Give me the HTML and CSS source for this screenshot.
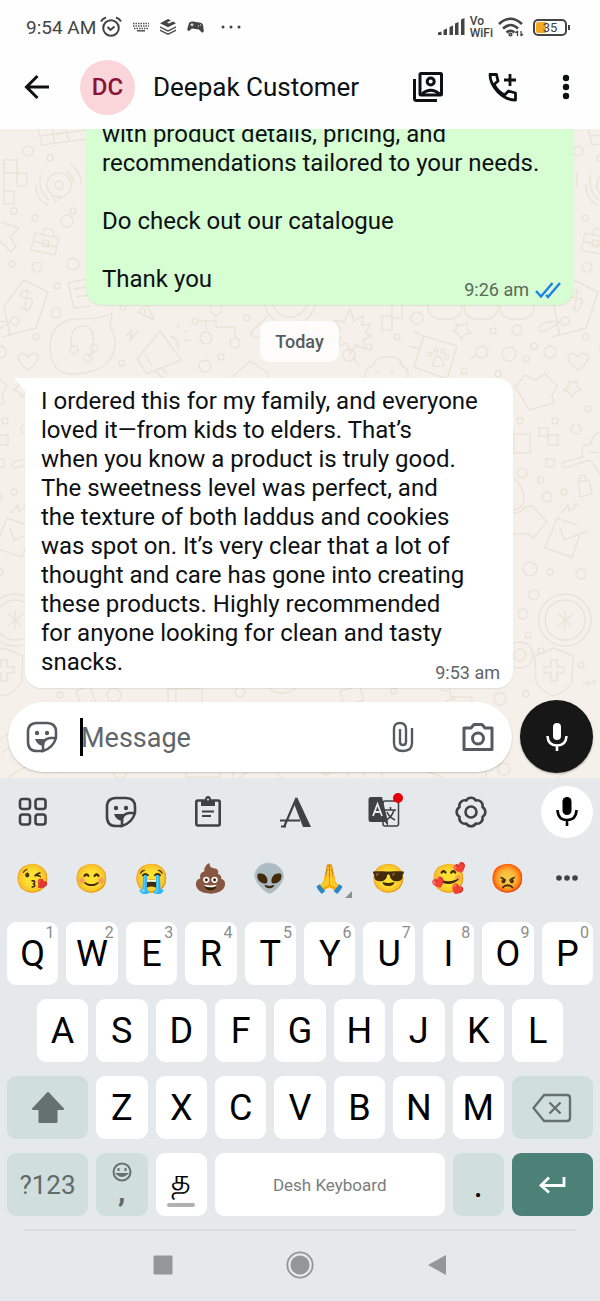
FILE: index.html
```
<!DOCTYPE html>
<html lang="en">
<head>
    <meta charset="UTF-8">
    <meta name="viewport" content="width=device-width, initial-scale=1.0">
    <title>Deepak Customer</title>
    <link rel="stylesheet" href="styles.css">
</head>
<body>
    <header class="top">
        <div class="status-bar">
            <div class="status-left">
                <span class="clock">9:54 AM</span>
                <svg class="alarm" width="22" height="22" viewBox="0 0 22 22" fill="none" stroke="#444" stroke-width="2">
                    <circle cx="11" cy="12" r="7.8"/>
                    <path d="M1 5.500Q2.500 2.500 6 1.500M21 5.500Q19.500 2.500 16 1.500M7.500 11l3 3 4-3.500"/>
                </svg>
                <svg width="16" height="10" viewBox="0 0 16 10" fill="none" stroke="#555" stroke-width="1.500">
                    <path stroke-dasharray="1.500 1" d="M0 1.500h16M0 4h16M1 6.500h14"/><path d="M4 8.800h8"/>
                </svg>
                <svg width="16" height="16" viewBox="0 0 16 16" fill="#444">
                    <path d="M8 0l3 1.500-4 2 2 1 4-2 3 1.700-8 4-8-4z"/>
                    <path d="M0 7.200l8 4 8-4v1.600l-8 4-8-4zM0 10.600l8 4 8-4v1.400L8 16l-8-4z"/>
                </svg>
                <svg width="17" height="12" viewBox="0 0 17 12">
                    <path fill="#444" d="M2 2Q3 0 6 .5l6 1Q15.500 1.500 16 4l.8 6q-.3 2-2 1.500L12 8.500 5 7.500 2 10Q0 10 .3 8z"/>
                    <path stroke="#fff" d="M3.500 3.800h3M5 2.300v3M11 5h1M13 4h1"/>
                </svg>
                <svg class="more-dots" width="20" height="4" viewBox="0 0 20 4" fill="#444">
                    <circle cx="2" cy="2" r="1.500"/><circle cx="10" cy="2" r="1.500"/><circle cx="18" cy="2" r="1.500"/>
                </svg>
            </div>
            <div class="status-right">
                <svg width="27" height="18" viewBox="0 0 27 18" fill="#444">
                    <path d="M0 14.500l3.500-1V17H0zM5.500 12l3.500-1.500V17H5.500zM11.500 9L15 7.500V17h-3.500zM17 5.500L20.500 4v13H17zM23 1.500L26.500 0v17H23z"/>
                </svg>
                <span class="vowifi">Vo<br>WiFi</span>
                <svg width="26" height="20" viewBox="0 0 26 20" fill="none" stroke="#444" stroke-width="2.600">
                    <path d="M1 7Q12.500-3.500 24 7M5 11.500q7.500-7 15 0M8.500 15.500q4-3.500 8 0"/>
                    <circle cx="12.500" cy="17.500" r=".8"/>
                    <path stroke-width="1.300" d="M19.500 14v5M19.500 14l-2 2M23 19v-5M23 19l2-2"/>
                </svg>
                <span class="battery"><span class="battery-level">35</span></span>
            </div>
        </div>

        <div class="chat-bar">
            <button class="icon-btn" aria-label="Back">
                <svg width="26" height="26" viewBox="0 0 26 26" fill="none" stroke="#0d1114" stroke-width="3">
                    <path d="M25 13H3M13.500 2L2.500 13l11 11"/>
                </svg>
            </button>
            <div class="avatar">DC</div>
            <h1 class="contact">Deepak Customer</h1>
            <div class="chat-actions">
                <button class="icon-btn" aria-label="Contacts">
                    <svg width="32" height="32" viewBox="0 0 32 32" fill="none" stroke="#0d1114" stroke-width="3">
                        <rect x="8" y="2.500" width="21.500" height="21.500" rx="1"/>
                        <circle cx="18.700" cy="10.500" r="3.500"/>
                        <path d="M10 23q8.700-7.500 17.500 0"/>
                        <path d="M2.500 8v19.500q0 2 2 2H25"/>
                    </svg>
                </button>
                <button class="icon-btn" aria-label="Call">
                    <svg width="30" height="30" viewBox="0 0 30 30" fill="none" stroke="#0d1114" stroke-width="2.800" stroke-linejoin="round">
                        <path d="M2 2.500h6.500l1.500 6.500-4 3.500q3.500 7 10.500 10.500l4-4 7 2V28Q18 28 10 20 2 11.500 2 2.500z"/>
                        <path d="M22 2v12M16 8h12"/>
                    </svg>
                </button>
                <button class="icon-btn" aria-label="More options">
                    <svg width="8" height="26" viewBox="0 0 8 26" fill="#0d1114">
                        <circle cx="4" cy="4" r="3.200"/><circle cx="4" cy="13" r="3.200"/><circle cx="4" cy="22" r="3.200"/>
                    </svg>
                </button>
            </div>
        </div>
    </header>

    <main class="conversation">
        <!-- Doodle wallpaper, the tile repeats every 550px -->
        <svg class="wallpaper" aria-hidden="true">
            <g id="doodles">
                <!-- small circles -->
                <circle cx="28" cy="22" r="5"/><circle cx="50" cy="29" r="3"/><circle cx="73" cy="82" r="3"/>
                <circle cx="67" cy="92" r="6"/><circle cx="14" cy="82" r="3"/><circle cx="35" cy="89" r="3"/>
                <circle cx="12" cy="135" r="3"/><circle cx="37" cy="138" r="5"/><circle cx="73" cy="135" r="6"/>
                <circle cx="57" cy="157" r="3"/><circle cx="56" cy="184" r="5"/><circle cx="36" cy="208" r="3"/>
                <circle cx="123" cy="178" r="3"/><circle cx="122" cy="234" r="3"/><circle cx="205" cy="237" r="6"/>
                <circle cx="221" cy="228" r="3"/><circle cx="247" cy="189" r="3"/><circle cx="417" cy="189" r="6"/>
                <circle cx="493" cy="202" r="3"/><circle cx="517" cy="201" r="5"/><circle cx="369" cy="218" r="3"/>
                <circle cx="397" cy="208" r="3"/><circle cx="509" cy="225" r="7"/><circle cx="526" cy="230" r="3"/>
                <circle cx="534" cy="217" r="3"/><circle cx="550" cy="223" r="6"/><circle cx="498" cy="245" r="3"/>
                <circle cx="464" cy="242" r="3"/><circle cx="520" cy="292" r="3"/><circle cx="555" cy="292" r="3"/>
                <circle cx="576" cy="300" r="5"/><circle cx="588" cy="280" r="3"/><circle cx="522" cy="344" r="5"/>
                <circle cx="541" cy="351" r="3"/><circle cx="547" cy="368" r="5"/><circle cx="564" cy="363" r="3"/>
                <circle cx="530" cy="440" r="7"/><circle cx="550" cy="443" r="3"/><circle cx="581" cy="445" r="5"/>
                <circle cx="534" cy="466" r="5"/><circle cx="523" cy="485" r="5"/><circle cx="528" cy="506" r="3"/>
                <circle cx="541" cy="522" r="3"/><circle cx="581" cy="536" r="3"/><circle cx="526" cy="565" r="3"/>
                <circle cx="60" cy="566" r="3"/><circle cx="114" cy="566" r="7"/><circle cx="394" cy="562" r="3"/>
                <circle cx="500" cy="570" r="6"/><circle cx="120" cy="642" r="7"/><circle cx="62" cy="640" r="3"/>
                <circle cx="326" cy="643" r="3"/><circle cx="504" cy="640" r="6"/><circle cx="240" cy="563" r="5"/>
                <!-- squares and calendar -->
                <path d="M4 31h13v13H4zM17 44h10v13H17zM4 44v18M4 62h10v13H4zM38 0l4 16 44-6M40 7l46-6M52 0l3 14M66 0l3 12"/>
                <path d="M382 187h10v14h-10zM392 175h10v14h-10zM514 305h16v19h-16zM539 299h9v8h-9zM548 306h10v10h-10zM546 330h8v8h-8z"/>
                <!-- broadcast -->
                <circle cx="59" cy="56" r="12"/><circle cx="59" cy="56" r="4"/>
                <path d="M53 67l2 6 7-5M41 46q-4 15 8 25M36 56q0 15 12 20M67 42q8 8 7 15M70 35q13 10 11 20"/>
                <!-- star and briefcase -->
                <path d="M0 93l19 6-9 9 6 9-5 6-10-10-7 8"/>
                <path d="M35 104l24 5-4 17-24-5zM42 105l3-6 8 2 1 7M33 112l23 6M43 111l6 1-1 6-6-1z"/>
                <!-- price tag -->
                <path d="M24 151l24 12-12 36-34 9M24 151L4 177l6 30"/><circle cx="15" cy="192" r="4"/>
                <path d="M31 164q-8-5-10 0t6 5 4 8-10 1M27 160l-2 21M10 193q-15-3-22 6 0 10 22-6"/>
                <path d="M68 154l20-4M68 154l6 25 16-2M74 160l12-2M76 168l12-2"/>
                <!-- heart -->
                <path d="M28 241q-10-7-10-12 1-6 7-4l3 3q5-7 10-1 2 5-10 14z"/>
                <!-- headset bubble -->
                <path d="M112 184q-12 7-40 6-21 5-22 27 0 30 26 28 37-3 39-29 0-12-5-18z"/>
                <path d="M71 219v-8q1-15 14-14 9 2 8 16v10l-5 5"/><circle cx="74" cy="221" r="4"/><circle cx="94" cy="219" r="4"/><circle cx="88" cy="229" r="4"/>
                <path d="M125 208l7-6-2 9 8-9M138 183l9-8 7 16zM145 180v5"/>
                <!-- megaphone -->
                <path d="M160 202l-23 28 10 15 34-14zM144 224l8 13M155 242l10 9M161 238l6 7M170 207q10 3 8 13M177 199l2-6M183 204l5-3M184 211l7 1"/>
                <!-- node tree -->
                <circle cx="216" cy="180" r="6"/><circle cx="195" cy="192" r="3"/><circle cx="206" cy="209" r="6"/><circle cx="235" cy="214" r="5"/>
                <path d="M216 186v12M198 192h17M206 193v10M216 198h19v11M232 248l18-16 18 12v8"/>
                <circle cx="290" cy="170" r="26"/><circle cx="290" cy="170" r="18"/><path d="M268 187l-15 14q-5 6 3 8l21-13"/>
                <!-- burst, pills, sparkle -->
                <path d="M350 180l4 12 9-5-1 9 9-1-6 9 7 3-9 4 2 9-9-4-6 9-3-11-9 3 3-9-7-3 7-4-6-10 9 2z"/>
                <rect x="428" y="166" width="34" height="24" rx="12"/><rect x="464" y="166" width="34" height="24" rx="12"/><rect x="500" y="166" width="34" height="24" rx="12"/>
                <path d="M456 195q6 3 11-1-1 7 4 10-8 0-10 7-1-7-8-9 5-1 3-7z"/>
                <!-- paw card -->
                <path d="M424 207l33 10-10 33-33-12zM414 203l10 4-5 13-10-3"/><path d="M434 231q4-8 8 0 5 8-4 6-8 2-4-6z"/>
                <circle cx="430" cy="225" r="2"/><circle cx="436" cy="221" r="2"/><circle cx="443" cy="222" r="2"/><circle cx="447" cy="228" r="2"/>
                <circle cx="482" cy="223" r="6"/><path d="M476 226l-6 4M354 230l5 7"/><circle cx="349" cy="226" r="6"/>
                <path d="M366 250q-4-10 7-13 2-10 14-9 13-2 15 9 8 4 6 12M375 245l4-4M390 245l4-4"/>
                <!-- shirt and dragonfly -->
                <path d="M515 258l10-12 10 5 10-6 12 12-5 9 2 8-25 7-8-14zM569 252q5 3 8 0-1 7 4 9-7 1-9 8-1-6-8-8 6-3 5-9z"/>
                <path d="M583 328q-4-12 8-13 1-12 11-12M583 328l-20 5q-3 4 2 6l25-8M591 332l10 15M590 323l12 1"/>
                <path d="M578 353l11-2 3 14-12 3zM580 352v-5l5-1 1 5M561 384l7-8 1 6 6-4v-3l3 1"/>
                <!-- puzzle and tick note -->
                <path d="M514 349q10 10 10 20t-10 12M514 384q10-1 10-6l8-1 15 16-14 16-4-4h-16"/>
                <path d="M577 396l-20-7-12 30 27 9 8-22M560 399l4 12 23-9"/>
                <!-- compass and shield -->
                <circle cx="565" cy="491" r="26"/><circle cx="565" cy="491" r="20"/><path d="M558 484l14 14M573 485l-15 12M565 481v20"/>
                <circle cx="520" cy="526" r="13"/><circle cx="520" cy="526" r="6"/>
                <path d="M554 519l19 8-1 26q-6 10-18 14-12-4-18-14l-1-26zM551 531h6v7h7v6h-7v8h-6v-8h-7v-6h7z"/>
                <path d="M582 557l6-5v4l7-5v4M168 560h34v14h-34zM176 560v14M340 562l20-5 4 14-20 5zM440 560q5 4 10 0-1 7 4 10-8 0-10 6"/>
                <path d="M264 554q14 18 34 4M0 610l34-21M2 624l36-26M76 562l14-5 6 18-14 4zM450 568h22v12"/>
                <!-- under the message box -->
                <path d="M8 648l28-16M186 636h34v12h-34zM232 648l4-11 11 6-8 6M268 640q5 4 10 0-1 7 4 9M338 634h10v14M354 634h10v14M372 634h10v14M410 636l32 12M460 640h26v10"/>
            </g>
            <use href="#doodles" x="-550"/>
            <use href="#doodles" x="550"/>
        </svg>

        <div class="messages">
            <div class="bubble sent">
                <p>with product details, pricing, and<br>recommendations tailored to your needs.<br><br>Do check out our catalogue<br><br>Thank you</p>
                <span class="meta">9:26 am
                    <svg width="26" height="18" viewBox="0 0 26 18" fill="none" stroke="#1b80e8" stroke-width="2.400">
                        <path d="M1 10l5 5.500L17.500 2M11 14l2 2L25 2"/>
                    </svg>
                </span>
            </div>
            <div class="day">Today</div>
            <div class="bubble received">
                <p>I ordered this for my family, and everyone loved it—from kids to elders. That’s<br>when you know a product is truly good. The sweetness level was perfect, and<br>the texture of both laddus and cookies<br>was spot on. It’s very clear that a lot of thought and care has gone into creating these products. Highly recommended<br>for anyone looking for clean and tasty snacks.</p>
                <span class="meta">9:53 am</span>
            </div>
        </div>

        <form class="composer">
            <div class="message-box">
                <button type="button" class="icon-btn" aria-label="Stickers">
                    <svg width="32" height="32" viewBox="0 0 32 32" fill="none" stroke="#545b60" stroke-width="2.600">
                        <path d="M17 30h-6q-9 0-9-9V11q0-9 9-9h10q9 0 9 9v6q-3 10-13 13v-5q0-7 7-8h6"/>
                        <g fill="#545b60" stroke="none"><circle cx="11" cy="12" r="2.200"/><circle cx="21" cy="12" r="2.200"/><path d="M9 18h12l-3 3-1 4q-6-1-8-7z"/></g>
                    </svg>
                </button>
                <span class="caret"></span>
                <input class="message-input" type="text" placeholder="Message" aria-label="Message">
                <button type="button" class="icon-btn" aria-label="Attach">
                    <svg width="22" height="32" viewBox="0 0 22 32" fill="none" stroke="#545b60" stroke-width="2.400">
                        <path d="M20 7v15q0 8-9 8t-9-8V8q0-6 6-6t6 6v13q0 3-3 3t-3-3V8"/>
                    </svg>
                </button>
                <button type="button" class="icon-btn" aria-label="Camera">
                    <svg width="32" height="30" viewBox="0 0 32 30" fill="none" stroke="#545b60" stroke-width="3">
                        <path d="M2 6h7l3-3.500h8L23 6h7v21.500H2z" stroke-linejoin="round"/><circle cx="16" cy="16.500" r="5.500"/>
                    </svg>
                </button>
            </div>
            <button type="button" class="record" aria-label="Record voice message">
                <svg width="22" height="30" viewBox="0 0 22 30" fill="none" stroke="#fff" stroke-width="2.600">
                    <rect x="7" y="1" width="8" height="17" rx="4" fill="#fff" stroke="none"/>
                    <path d="M1.500 14q.5 9.500 9.500 9.500T20.500 14M11 23v6"/>
                </svg>
            </button>
        </form>
    </main>

    <section class="keyboard">
        <div class="toolbar">
            <button class="tool" aria-label="Menu">
                <svg width="30" height="30" viewBox="0 0 30 30" fill="none" stroke="#3f4245" stroke-width="2.600">
                    <rect x="2" y="2" width="10" height="10" rx="2.500"/><rect x="17.500" y="2" width="10" height="10" rx="2.500"/>
                    <rect x="2" y="17.500" width="10" height="10" rx="2.500"/><rect x="17.500" y="17.500" width="10" height="10" rx="2.500"/>
                </svg>
            </button>
            <button class="tool" aria-label="Stickers">
                <svg width="32" height="32" viewBox="0 0 32 32" fill="none" stroke="#3f4245" stroke-width="2.600">
                    <path d="M17 30h-6q-9 0-9-9V11q0-9 9-9h10q9 0 9 9v6q-3 10-13 13v-5q0-7 7-8h6"/>
                    <g fill="#3f4245" stroke="none"><circle cx="11" cy="12" r="2.200"/><circle cx="21" cy="12" r="2.200"/><path d="M9 18h12l-3 3-1 4q-6-1-8-7z"/></g>
                </svg>
            </button>
            <button class="tool" aria-label="Clipboard">
                <svg width="28" height="32" viewBox="0 0 28 32" fill="none" stroke="#3f4245" stroke-width="2.600">
                    <rect x="2.300" y="4.500" width="23.400" height="25" rx="1.500"/>
                    <path fill="#3f4245" stroke="none" d="M7 4h4q0-4 3-4t3 4h4v6H7z"/><circle cx="14" cy="3.500" r="1" fill="#e5e9ec" stroke="none"/>
                    <path stroke-width="2" d="M8 15.500h12M8 20h9"/>
                </svg>
            </button>
            <button class="tool" aria-label="Fonts">
                <svg width="32" height="32" viewBox="0 0 32 32" fill="#3f4245">
                    <path d="M17 1l14 30h-8L14.500 9z"/><path d="M16.500 2L4 31M0 24.500h20M1 30.500h5" fill="none" stroke="#3f4245" stroke-width="2.200"/>
                </svg>
            </button>
            <button class="tool" aria-label="Translate">
                <svg width="32" height="32" viewBox="0 0 32 32">
                    <rect x="15" y="5" width="15.500" height="25" rx="2" fill="none" stroke="#3f4245" stroke-width="1.500"/>
                    <path d="M17 14h11M22.500 11v3M26 14q-2 7-8 10M19 16q2 5 8 8" fill="none" stroke="#3f4245" stroke-width="1.600"/>
                    <path fill="#3f4245" d="M3 1h11l6 25v4l-3-4H3q-2.500 0-2.500-2.500V3.500Q.5 1 3 1z"/>
                    <path d="M5 20L9.500 8 14 20M6.500 16h6" fill="none" stroke="#e5e9ec" stroke-width="1.800"/>
                </svg>
                <span class="dot"></span>
            </button>
            <button class="tool" aria-label="Settings">
                <svg width="32" height="32" viewBox="0 0 32 32" fill="none" stroke="#3f4245" stroke-width="2.600" stroke-linejoin="round">
                    <path d="M27.500 11.200a5.500 5.500 0 0 1 0 9.600a5.500 5.500 0 0 1-6.700 6.700a5.500 5.500 0 0 1-9.600 0a5.500 5.500 0 0 1-6.700-6.700a5.500 5.500 0 0 1 0-9.600a5.500 5.500 0 0 1 6.700-6.700a5.500 5.500 0 0 1 9.600 0a5.500 5.500 0 0 1 6.700 6.700z"/>
                    <circle cx="16" cy="16" r="5.500"/>
                </svg>
            </button>
            <button class="voice" aria-label="Voice typing">
                <svg width="22" height="30" viewBox="0 0 22 30" fill="none" stroke="#000" stroke-width="2.600">
                    <rect x="6.500" y="0" width="9" height="18" rx="4.500" fill="#000" stroke="none"/>
                    <path d="M1.500 13q.5 10 9.500 10t9.500-10M11 23v6"/>
                </svg>
            </button>
        </div>

        <div class="emoji-row">
            <button>😘</button>
            <button>😊</button>
            <button>😭</button>
            <button>💩</button>
            <button>👽</button>
            <button class="has-variants">🙏</button>
            <button>😎</button>
            <button>🥰</button>
            <button>😡</button>
            <button aria-label="More emoji">
                <svg width="24" height="8" viewBox="0 0 24 8" fill="#3f4245">
                    <circle cx="4" cy="4" r="2.800"/><circle cx="12" cy="4" r="2.800"/><circle cx="20" cy="4" r="2.800"/>
                </svg>
            </button>
        </div>

        <div class="keys">
            <button class="key">Q<sup>1</sup></button>
            <button class="key">W<sup>2</sup></button>
            <button class="key">E<sup>3</sup></button>
            <button class="key">R<sup>4</sup></button>
            <button class="key">T<sup>5</sup></button>
            <button class="key">Y<sup>6</sup></button>
            <button class="key">U<sup>7</sup></button>
            <button class="key">I<sup>8</sup></button>
            <button class="key">O<sup>9</sup></button>
            <button class="key">P<sup>0</sup></button>

            <button class="key indent">A</button>
            <button class="key">S</button>
            <button class="key">D</button>
            <button class="key">F</button>
            <button class="key">G</button>
            <button class="key">H</button>
            <button class="key">J</button>
            <button class="key">K</button>
            <button class="key">L</button>

            <button class="key wide special row-start" aria-label="Shift">
                <svg width="34" height="32" viewBox="0 0 34 32" fill="#66706f" stroke="#66706f" stroke-width="2" stroke-linejoin="round">
                    <path d="M17 1l15 16h-6.500v13h-17V17H2z"/>
                </svg>
            </button>
            <button class="key">Z</button>
            <button class="key">X</button>
            <button class="key">C</button>
            <button class="key">V</button>
            <button class="key">B</button>
            <button class="key">N</button>
            <button class="key">M</button>
            <button class="key wide special" aria-label="Backspace">
                <svg width="40" height="30" viewBox="0 0 40 30" fill="none" stroke="#66706f" stroke-width="2.400" stroke-linejoin="round">
                    <path d="M12 2h23q3 0 3 3v20q0 3-3 3H12L1.500 15zM17.500 9.500l11 11M28.500 9.500l-11 11"/>
                </svg>
            </button>

            <button class="key wide special symbols row-start">?123</button>
            <button class="key special comma" aria-label="Emoji and comma">
                <svg width="20" height="20" viewBox="0 0 20 20" fill="none" stroke="#66706f" stroke-width="2">
                    <circle cx="10" cy="10" r="8.500"/><path d="M5.500 12q4.500 4 9 0z"/><path d="M6.500 6v3M13.500 6v3"/>
                </svg>
                <span>,</span>
            </button>
            <button class="key language" lang="ta">த</button>
            <button class="key space">Desh Keyboard</button>
            <button class="key special period">.</button>
            <button class="key wide enter" aria-label="Enter">
                <svg width="28" height="18" viewBox="0 0 28 18" fill="none" stroke="#fff" stroke-width="2.800">
                    <path d="M26 1v8.500H3M11 1.500L3 9.500l8 7"/>
                </svg>
            </button>
        </div>

        <nav class="system-nav">
            <button aria-label="Recent apps">
                <svg width="28" height="28" viewBox="0 0 28 28"><rect x="4.500" y="4.500" width="19" height="19" rx="1" fill="#949699"/></svg>
            </button>
            <button aria-label="Home">
                <svg width="28" height="28" viewBox="0 0 28 28"><circle cx="14" cy="14" r="12.700" fill="none" stroke="#949699" stroke-width="1.800"/><circle cx="14" cy="14" r="9.500" fill="#949699"/></svg>
            </button>
            <button aria-label="Back">
                <svg width="28" height="28" viewBox="0 0 28 28"><path d="M5 14L23 4v20z" fill="#949699"/></svg>
            </button>
        </nav>
    </section>
</body>
</html>
```
FILE: styles.css
```
* {
    box-sizing: border-box;
}

body {
    margin: 0;
    height: 100vh;
    display: flex;
    flex-direction: column;
    font-family: Roboto, "Noto Sans", sans-serif;
    color: #0d1114;
    background: #e5e9ec;
}

button {
    margin: 0;
    padding: 0;
    border: none;
    background: none;
    font: inherit;
    color: inherit;
}

svg {
    display: block;
    flex: none;
}

.icon-btn {
    display: flex;
    align-items: center;
    justify-content: center;
}

/* Status bar and chat header */
.top {
    background: #fefefe;
    padding-bottom: 9px;
}

.status-bar {
    height: 54px;
    padding: 0 33px 0 26px;
    display: flex;
    align-items: center;
    justify-content: space-between;
    color: #444;
}

.status-left {
    display: flex;
    align-items: center;
    gap: 11px;
}

.clock {
    font-size: 19px;
}

.alarm {
    margin-left: -7px;
}

.more-dots {
    margin-left: 6px;
}

.status-right {
    display: flex;
    align-items: center;
    gap: 5px;
}

.vowifi {
    font-size: 12px;
    line-height: 12px;
    font-weight: 500;
}

.battery {
    position: relative;
    margin-left: 4px;
    width: 34px;
    height: 17px;
    border: 2px solid #444;
    border-radius: 5px;
    padding: 1px;
}

.battery::after {
    content: "";
    position: absolute;
    top: 4px;
    right: -5px;
    width: 2px;
    height: 5px;
    background: #444;
}

.battery-level {
    display: block;
    height: 11px;
    border-radius: 2px;
    font-size: 13px;
    line-height: 11px;
    text-align: center;
    background: linear-gradient(90deg, #f5a623 35%, transparent 35%);
}

.chat-bar {
    height: 66px;
    padding: 0 30px 0 24px;
    display: flex;
    align-items: center;
}

.avatar {
    width: 55px;
    height: 55px;
    margin: 0 18px 0 30px;
    border-radius: 50%;
    background: #fad5da;
    color: #8c1237;
    font-size: 24px;
    font-weight: 500;
    line-height: 55px;
    text-align: center;
}

.contact {
    flex: 1;
    margin: 0;
    font-size: 26px;
    font-weight: 400;
}

.chat-actions {
    display: flex;
    gap: 44px;
}

/* Conversation */
.conversation {
    position: relative;
    flex: 1;
    min-height: 0;
    display: flex;
    flex-direction: column;
    background: #f5f1ea;
    overflow: hidden;
}

.wallpaper {
    position: absolute;
    inset: 0;
    width: 100%;
    height: 100%;
    fill: none;
    stroke: #eae3d8;
    stroke-width: 1.4;
}

.messages {
    position: relative;
    flex: 1;
    min-height: 0;
    display: flex;
    flex-direction: column;
    justify-content: flex-end;
    padding: 0 26px 12px 25px;
}

.bubble {
    position: relative;
    flex: none;
    display: grid;
    width: 488px;
    max-width: 90%;
    padding: 9px 13px 6px 16px;
    border-radius: 16px;
    box-shadow: 0 1px 1px rgba(0, 0, 0, 0.08);
}

.bubble p {
    grid-area: 1 / 1;
    margin: 0;
    padding-bottom: 5px;
    font-size: 24px;
    line-height: 29px;
}

.sent {
    align-self: flex-end;
    background: #d7fdd2;
}

.received {
    background: #fff;
}

.received p {
    padding-right: 12px;
}

.received::before {
    content: "";
    position: absolute;
    top: 0;
    left: -11px;
    border: 11px solid transparent;
    border-top: 13px solid #fff;
}

.meta {
    grid-area: 1 / 1;
    align-self: end;
    justify-self: end;
    display: flex;
    align-items: center;
    gap: 6px;
    font-size: 18px;
    line-height: 18px;
    color: #5f6567;
}

.sent .meta {
    color: #566b58;
}

.day {
    align-self: center;
    margin: 16px 0;
    padding: 0 15px;
    border-radius: 10px;
    background: #fdfcfb;
    color: #555b5f;
    font-size: 18px;
    font-weight: 500;
    line-height: 41px;
}

/* Message box */
.composer {
    position: relative;
    display: flex;
    align-items: center;
    gap: 8px;
    padding: 0 7px 5px 8px;
}

.message-box {
    flex: 1;
    min-width: 0;
    height: 70px;
    padding: 0 18px;
    border-radius: 35px;
    background: #fff;
    box-shadow: 0 1px 2px rgba(0, 0, 0, 0.2);
    display: flex;
    align-items: center;
}

.caret {
    width: 3px;
    height: 38px;
    margin: 0 -2px 0 22px;
    background: #000;
}

.message-input {
    flex: 1;
    min-width: 0;
    padding: 2px 0 0;
    border: none;
    outline: none;
    background: none;
    font: inherit;
    font-size: 27px;
}

.message-input::placeholder {
    color: #5f666b;
    opacity: 1;
}

.message-box .icon-btn:last-child {
    margin-left: 48px;
}

.record {
    width: 73px;
    height: 73px;
    border-radius: 50%;
    background: #171717;
    box-shadow: 0 1px 2px rgba(0, 0, 0, 0.3);
    display: flex;
    align-items: center;
    justify-content: center;
}

/* Keyboard */
.toolbar {
    display: flex;
    align-items: center;
    justify-content: space-between;
    padding: 8px 7px 0 15px;
}

.tool {
    position: relative;
    width: 36px;
    display: flex;
    justify-content: center;
}

.dot {
    position: absolute;
    top: -3px;
    right: -1px;
    width: 10px;
    height: 10px;
    border-radius: 50%;
    background: #e3000b;
}

.voice {
    width: 52px;
    height: 52px;
    border-radius: 50%;
    background: #fff;
    display: flex;
    align-items: center;
    justify-content: center;
}

.emoji-row {
    display: grid;
    grid-template-columns: repeat(10, 1fr);
    height: 84px;
    padding: 0 3px 4px;
}

.emoji-row button {
    position: relative;
    display: flex;
    align-items: center;
    justify-content: center;
    font-size: 28px;
    font-family: "Noto Color Emoji", Roboto, sans-serif;
}

.has-variants::after {
    content: "";
    position: absolute;
    right: 7px;
    bottom: 20px;
    border-left: 7px solid transparent;
    border-bottom: 7px solid #8d8f91;
}

.keys {
    display: grid;
    grid-template-columns: repeat(20, 1fr);
    grid-auto-rows: 63px;
    row-gap: 14px;
    padding: 0 3px;
}

.key {
    position: relative;
    grid-column: span 2;
    margin: 0 4px;
    border-radius: 9px;
    background: #fff;
    color: #000;
    font-size: 36px;
    display: flex;
    align-items: center;
    justify-content: center;
}

.key.indent {
    grid-column: 2 / span 2;
}

.key.wide {
    grid-column: span 3;
}

.key.row-start {
    grid-column: 1 / span 3;
}

.key sup {
    position: absolute;
    top: 2px;
    right: 4px;
    font-size: 16px;
    line-height: 18px;
    color: #8c8c8c;
}

.key.special {
    background: #d0dfde;
}

.key.symbols {
    font-size: 26px;
    color: #5f6a69;
}

.key.comma {
    flex-direction: column;
    justify-content: flex-start;
    padding-top: 9px;
    color: #5f6a69;
}

.comma span {
    font-size: 30px;
    font-weight: 700;
    line-height: 20px;
}

.key.language {
    flex-direction: column;
    font-size: 30px;
    line-height: 34px;
}

.language::after {
    content: "";
    width: 28px;
    height: 4px;
    margin-top: 6px;
    border-radius: 2px;
    background: #b0b0b0;
}

.key.space {
    grid-column: span 8;
    font-size: 17px;
    color: #7c7c7c;
}

.key.enter {
    background: #4b8177;
}

.system-nav {
    display: flex;
    justify-content: center;
    gap: 109px;
    margin: 13px 24px 0;
    padding: 20px 0 22px;
    border-top: 2px solid #d9dde0;
}
```
